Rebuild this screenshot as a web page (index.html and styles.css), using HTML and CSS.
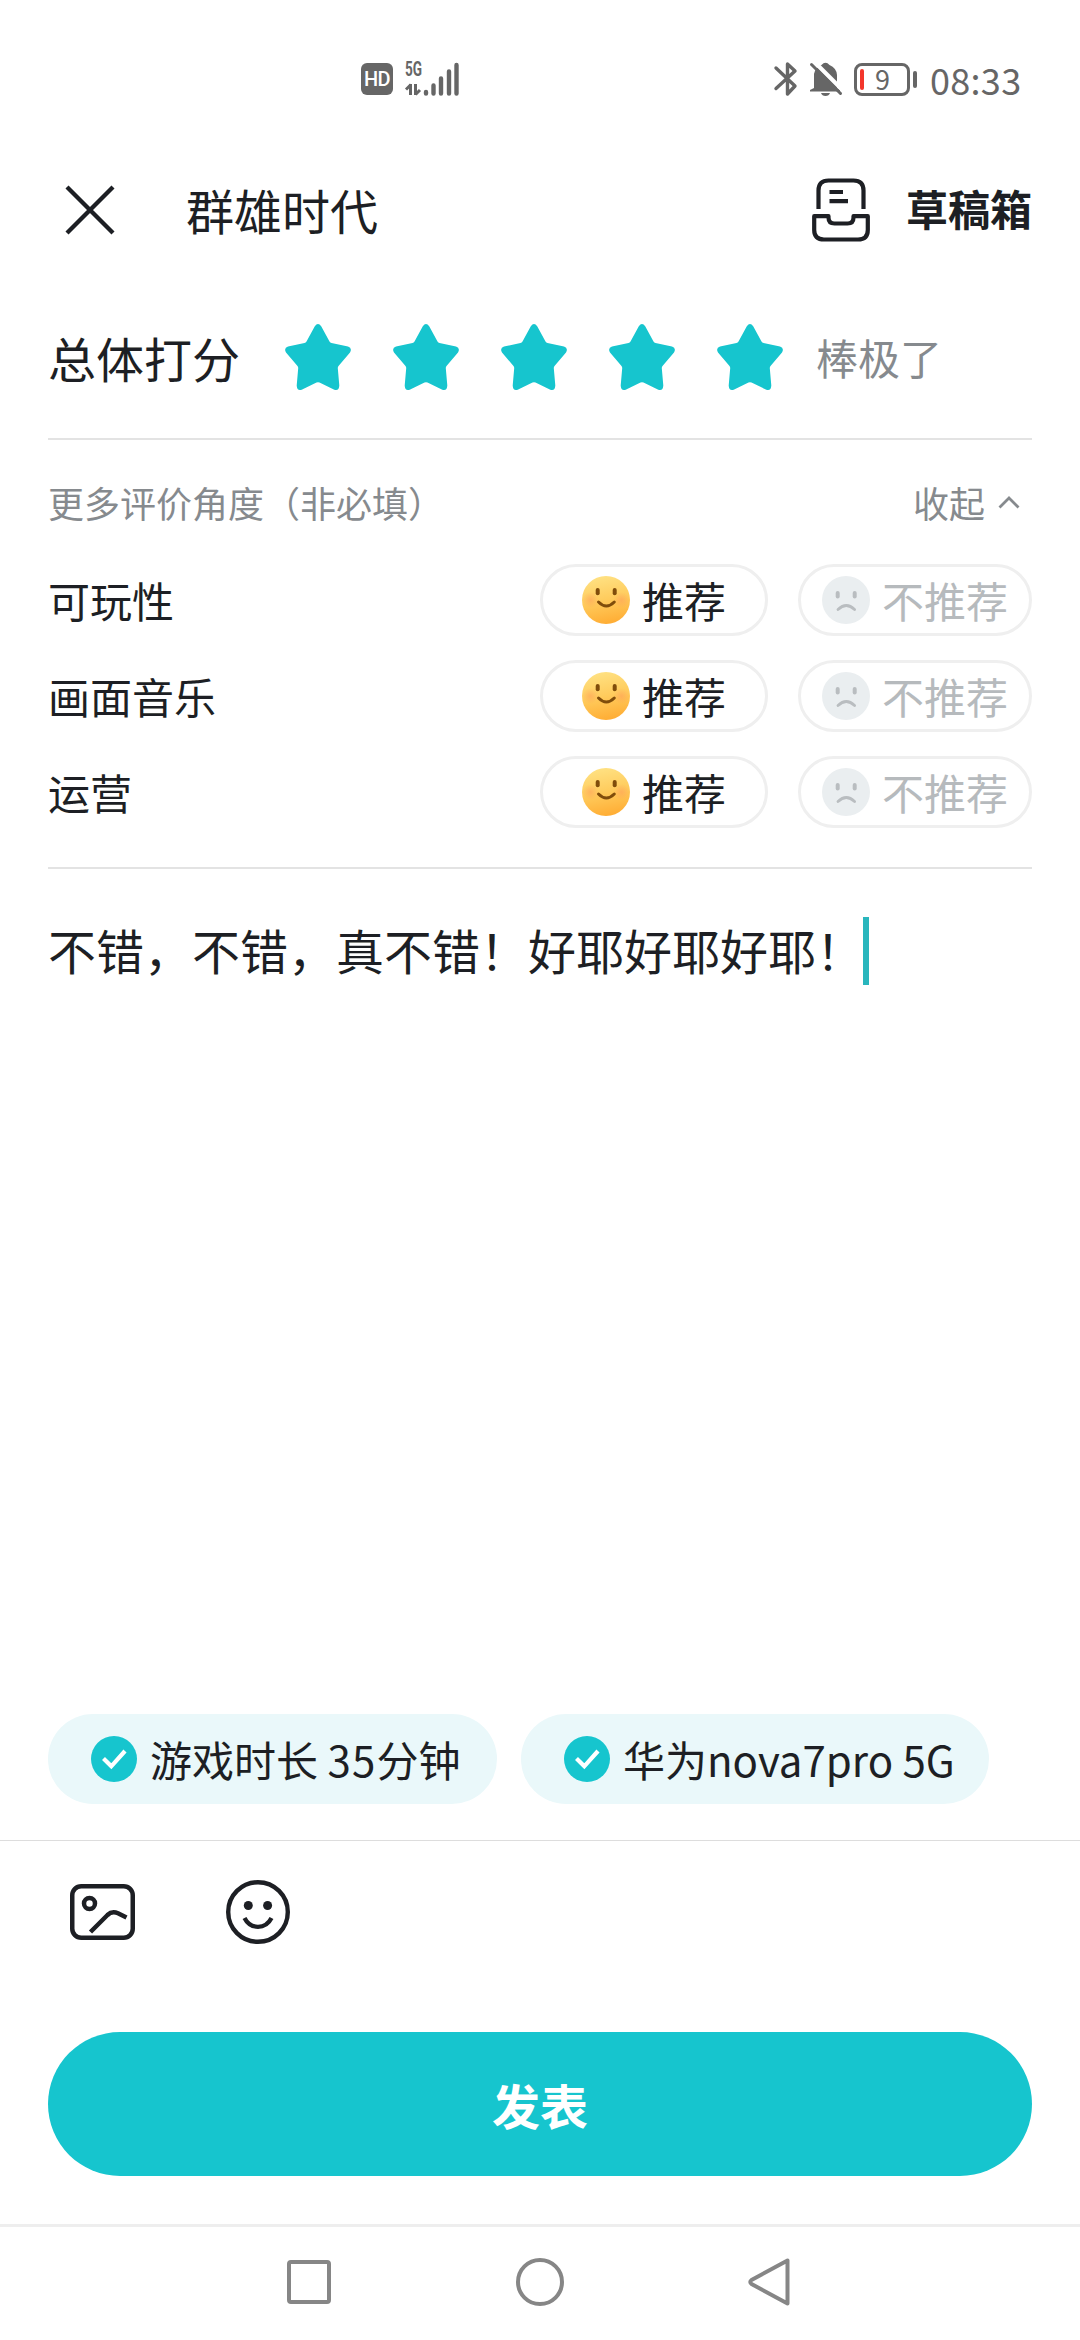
FILE: index.html
```html
<!DOCTYPE html>
<html lang="zh-CN">
<head>
<meta charset="utf-8">
<title>群雄时代</title>
<link rel="stylesheet" href="styles.css">
</head>
<body>
<svg class="defs" width="0" height="0" aria-hidden="true">
  <defs>
    <linearGradient id="sun" x1="0.4" y1="0" x2="0.6" y2="1">
      <stop offset="0" stop-color="#ffe182"/>
      <stop offset="0.5" stop-color="#ffcb5c"/>
      <stop offset="1" stop-color="#ffac33"/>
    </linearGradient>
    <radialGradient id="blush">
      <stop offset="0" stop-color="#ff9a5a" stop-opacity="0.5"/>
      <stop offset="1" stop-color="#ff9a5a" stop-opacity="0"/>
    </radialGradient>
    <symbol id="star" viewBox="0 0 66 66">
      <path d="M29.8 2.2Q33 -2 36.2 2.2L44.5 17.500Q45.200 18.600 46.500 18.900L63 22.500Q67.500 24.200 65 28.500L53.500 42Q52.700 43 52.800 44.200L54.300 61.500Q54 67.500 48.800 65.500L34.500 58.500Q33 57.800 31.500 58.500L17.200 65.500Q12 67.500 11.700 61.500L13.200 44.200Q13.300 43 12.500 42L1 28.500Q-1.500 24.200 3 22.500L19.500 18.900Q20.800 18.600 21.500 17.500Z" fill="#16c5ce"/>
    </symbol>
    <symbol id="happy" viewBox="0 0 48 48">
      <circle cx="24" cy="24" r="24" fill="url(#sun)"/>
      <circle cx="8.500" cy="24" r="8" fill="url(#blush)"/>
      <circle cx="39.500" cy="24" r="8" fill="url(#blush)"/>
      <rect x="13.700" y="12" width="4" height="7.200" rx="2" fill="#804d0b"/>
      <rect x="30.700" y="12" width="4" height="7.200" rx="2" fill="#804d0b"/>
      <path d="M16.500 26Q24.300 34 32.300 26" fill="none" stroke="#804d0b" stroke-width="3" stroke-linecap="round"/>
    </symbol>
    <symbol id="sad" viewBox="0 0 48 48">
      <circle cx="24" cy="24" r="24" fill="#eaeef0"/>
      <rect x="13.700" y="15" width="4" height="7.500" rx="2" fill="#b9bdc0"/>
      <rect x="30.700" y="15" width="4" height="7.500" rx="2" fill="#b9bdc0"/>
      <path d="M16 33.500Q24.300 25.500 32.600 33.500" fill="none" stroke="#b9bdc0" stroke-width="2.800" stroke-linecap="round"/>
    </symbol>
    <symbol id="check" viewBox="0 0 46 46">
      <circle cx="23" cy="23" r="23" fill="#16c5ce"/>
      <path d="M12.500 22.500L20.300 30.300L34 15" fill="none" stroke="#fff" stroke-width="4.200"/>
    </symbol>
  </defs>
</svg>
<div class="screen">
  <div class="status">
    <div class="status-left">
      <span class="hd">HD</span>
      <div class="signal">
        <div class="net"><span class="gen">5G</span>
          <svg width="16" height="13" viewBox="0 0 16 13"><path d="M5.500 1V12M6 1.500L1 6.500M10.500 1V12M10.500 11.500L15 7" fill="none" stroke="#666" stroke-width="3"/></svg>
        </div>
        <svg width="36" height="34" viewBox="0 0 36 34"><path d="M3 30V31.500M10.500 23.500V31.500M18 16.500V31.500M26 9.500V31.500M33.500 3V31.500" fill="none" stroke="#666" stroke-width="4.400" stroke-linecap="round"/></svg>
      </div>
    </div>
    <div class="status-right">
      <svg width="22" height="36" viewBox="0 0 22 36"><path d="M1 7L20 25L12.500 33V3L20 10L1 27.500" fill="none" stroke="#666" stroke-width="3.400" stroke-linejoin="round" stroke-linecap="round"/></svg>
      <svg class="bell" width="32" height="34" viewBox="0 0 32 34"><path d="M4 26V12Q5 6 11.500 3Q15.500 -1.500 19.500 3Q26.500 6 27 13V26L30 28V29.500H0V28ZM11 31H20Q19 34 15.500 34Q12 34 11 31Z" fill="#666"/><path d="M3.500 -1L34 29.500" stroke="#fff" stroke-width="4"/><path d="M1.500 2.500L30.500 31.500" stroke="#666" stroke-width="3" stroke-linecap="round"/></svg>
      <div class="battery"><i class="charge"></i><span>9</span></div>
      <i class="nub"></i>
      <span class="clock">08:33</span>
    </div>
  </div>

  <header class="header">
    <svg width="48" height="48" viewBox="0 0 48 48"><path d="M1 1L47 47M47 1L1 47" stroke="#1d1f24" stroke-width="4.300"/></svg>
    <h1 class="title">群雄时代</h1>
    <svg class="tray" width="58" height="64" viewBox="0 0 58 64"><g fill="none" stroke="#1d1f24" stroke-width="4.200"><path d="M6.500 31V12.500Q6.500 2.500 16.500 2.500H41.500Q51.500 2.500 51.500 12.500V31"/><path d="M17.500 14H31M17.500 23.200H36"/><path d="M2.200 38.200H16.500V39.500Q16.500 45.500 22.500 45.500H35.500Q41.500 45.500 41.500 39.500V38.200H55.800V52Q55.800 61.500 46 61.500H12Q2.200 61.500 2.200 52Z" stroke-linejoin="round"/></g></svg>
    <span class="drafts">草稿箱</span>
  </header>

  <section class="overall">
    <span class="overall-label">总体打分</span>
    <div class="stars">
      <svg width="66" height="66"><use href="#star"/></svg>
      <svg width="66" height="66"><use href="#star"/></svg>
      <svg width="66" height="66"><use href="#star"/></svg>
      <svg width="66" height="66"><use href="#star"/></svg>
      <svg width="66" height="66"><use href="#star"/></svg>
    </div>
    <span class="verdict">棒极了</span>
  </section>

  <section class="aspects">
    <div class="aspects-head">
      <span>更多评价角度（非必填）</span>
      <span class="fold">收起<svg width="22" height="14" viewBox="0 0 22 14"><path d="M1.500 12.500L11 3L20.500 12.500" fill="none" stroke="#868a8e" stroke-width="2.800"/></svg></span>
    </div>
    <div class="aspect">
      <span class="aspect-name">可玩性</span>
      <button class="pill yes"><svg width="48" height="48"><use href="#happy"/></svg><span>推荐</span></button>
      <button class="pill no"><svg width="48" height="48"><use href="#sad"/></svg><span>不推荐</span></button>
    </div>
    <div class="aspect">
      <span class="aspect-name">画面音乐</span>
      <button class="pill yes"><svg width="48" height="48"><use href="#happy"/></svg><span>推荐</span></button>
      <button class="pill no"><svg width="48" height="48"><use href="#sad"/></svg><span>不推荐</span></button>
    </div>
    <div class="aspect">
      <span class="aspect-name">运营</span>
      <button class="pill yes"><svg width="48" height="48"><use href="#happy"/></svg><span>推荐</span></button>
      <button class="pill no"><svg width="48" height="48"><use href="#sad"/></svg><span>不推荐</span></button>
    </div>
  </section>

  <main class="editor"><span class="draft-text">不错，不错，真不错！好耶好耶好耶！</span><i class="caret"></i></main>

  <div class="chips">
    <div class="chip played"><svg width="46" height="46"><use href="#check"/></svg><span>游戏时长 <span class="digits">35</span>分钟</span></div>
    <div class="chip device"><svg width="46" height="46"><use href="#check"/></svg><span>华为nova7pro 5G</span></div>
  </div>

  <div class="tools">
    <svg width="65" height="56" viewBox="0 0 65 56"><g fill="none" stroke="#1d1f24" stroke-width="4.500"><rect x="2.250" y="2.250" width="60.500" height="51.500" rx="9"/><circle cx="19.500" cy="19.500" r="5.500"/><path d="M20.500 48L37.500 31Q42 26.700 48 29.300L56.500 33.500"/></g></svg>
    <svg width="64" height="64" viewBox="0 0 64 64"><circle cx="32" cy="32" r="29.800" fill="none" stroke="#1d1f24" stroke-width="4.400"/><circle cx="22.300" cy="25.500" r="4.500" fill="#1d1f24"/><circle cx="41.600" cy="25.500" r="4.500" fill="#1d1f24"/><path d="M18.500 38Q23 46.800 32 46.800Q41 46.800 45.500 38" fill="none" stroke="#1d1f24" stroke-width="4.300"/></svg>
  </div>

  <button class="publish">发表</button>

  <nav class="navbar">
    <svg width="44" height="44" viewBox="0 0 44 44"><rect x="2" y="2" width="40" height="40" rx="2" fill="none" stroke="#868686" stroke-width="4"/></svg>
    <svg width="48" height="48" viewBox="0 0 48 48"><circle cx="24" cy="24" r="22" fill="none" stroke="#868686" stroke-width="4"/></svg>
    <svg width="42" height="48" viewBox="0 0 42 48"><path d="M39.500 2.500V45.500L3.500 26Q1 24 3.500 22Z" fill="none" stroke="#868686" stroke-width="4" stroke-linejoin="round"/></svg>
  </nav>
</div>
</body>
</html>
```

FILE: styles.css
```css
* { box-sizing: border-box; }
body {
  margin: 0;
  background: #fff;
  color: #1d1f24;
  font-family: "Noto Sans CJK SC", sans-serif;
}
svg { display: block; flex: none; overflow: visible; }
.defs { position: absolute; }
button { font: inherit; border: 0; padding: 0; }
.screen {
  width: 1080px;
  height: 2340px;
  display: flex;
  flex-direction: column;
  overflow: hidden;
}

.status {
  height: 158px;
  padding: 0 61px 0 361px;
  display: flex;
  justify-content: space-between;
  align-items: center;
  color: #666;
}
.status-left { display: flex; align-items: center; gap: 12px; }
.hd {
  width: 32px;
  height: 32px;
  border-radius: 6px;
  background: #666;
  color: #fff;
  font: 500 20px/33px Roboto, sans-serif;
  text-align: center;
  letter-spacing: -0.5px;
}
.signal { display: flex; align-items: flex-end; }
.net { width: 18px; height: 34px; display: flex; flex-direction: column; justify-content: space-between; }
.gen {
  font: 700 20px/15px Roboto, sans-serif;
  transform: scaleX(.68);
  transform-origin: left;
}
.status-right { display: flex; align-items: center; }
.bell { margin-left: 13px; }
.battery {
  margin-left: 12px;
  width: 56px;
  height: 33px;
  border: 3px solid #666;
  border-radius: 8px;
  display: flex;
  align-items: center;
  padding-left: 3px;
  gap: 11px;
  font: 400 27px/27px "Noto Sans CJK SC", sans-serif;
}
.battery span { padding-bottom: 2px; }
.charge { width: 4px; height: 21px; border-radius: 2px; background: #f3362b; }
.nub { margin-left: 3px; width: 4px; height: 17px; border-radius: 2px; background: #666; }
.clock {
  margin-left: 13px;
  width: 89px;
  font: 400 36px/40px "Noto Sans CJK SC", sans-serif;
  letter-spacing: 0.3px;
  white-space: nowrap;
}

.header {
  height: 104px;
  padding: 0 48px 0 66px;
  display: flex;
  align-items: center;
}
.title {
  margin: 0 auto 0 72px;
  padding-bottom: 3px;
  font-size: 48px;
  font-weight: 400;
  line-height: 60px;
}
.drafts {
  margin-left: 36px;
  padding-bottom: 4px;
  font-size: 42px;
  font-weight: 700;
  line-height: 60px;
}

.overall {
  height: 178px;
  margin: 0 48px;
  padding-top: 13px;
  border-bottom: 2px solid #e3e3e3;
  display: flex;
  align-items: center;
}
.overall-label { font-size: 48px; line-height: 60px; }
.stars { display: flex; gap: 42px; margin-left: 45px; }
.verdict { margin-left: 33px; font-size: 42px; line-height: 60px; color: #868a8e; }

.aspects {
  height: 429px;
  margin: 0 48px;
  padding-top: 34px;
  border-bottom: 2px solid #e3e3e3;
  display: flex;
  flex-direction: column;
  gap: 24px;
}
.aspects-head {
  height: 66px;
  padding-bottom: 11px;
  display: flex;
  align-items: center;
  justify-content: space-between;
  font-size: 36px;
  line-height: 54px;
  color: #868a8e;
}
.fold { display: flex; align-items: center; gap: 13px; padding-right: 12px; }
.aspect { height: 72px; display: flex; align-items: center; }
.aspect-name { margin-right: auto; font-size: 42px; line-height: 60px; }
.pill {
  height: 72px;
  border: 3px solid #efefef;
  border-radius: 36px;
  background: transparent;
  display: flex;
  align-items: center;
  justify-content: center;
  gap: 12px;
  font-size: 42px;
  line-height: 60px;
  color: #1d1f24;
}
.yes { width: 228px; }
.no { width: 234px; margin-left: 30px; color: #b6babd; }

.editor {
  flex: 1;
  padding: 48px 48px 0;
  display: flex;
  align-items: flex-start;
  font-size: 48px;
  white-space: nowrap;
}
.draft-text { line-height: 64px; }
.caret { width: 6px; height: 68px; background: #29b6bd; margin-left: -1px; }

.chips { height: 126px; padding: 0 48px; display: flex; gap: 24px; }
.chip {
  height: 90px;
  border-radius: 45px;
  background: #eaf8fa;
  display: flex;
  align-items: center;
  padding-left: 43px;
  gap: 13px;
  font-size: 42px;
  line-height: 60px;
  white-space: nowrap;
}
.played { width: 449px; }
.digits { letter-spacing: 1.2px; }
.device { width: 468px; }

.tools {
  height: 192px;
  border-top: 1px solid #ddd;
  padding: 39px 70px 0;
  display: flex;
  align-items: flex-start;
  gap: 91px;
}
.tools svg:first-child { margin-top: 4px; }
.publish {
  height: 144px;
  margin: 0 48px 48px;
  border-radius: 72px;
  background: #16c5ce;
  color: #fff;
  font-size: 48px;
  font-weight: 700;
  line-height: 60px;
}
.navbar {
  height: 116px;
  border-top: 3px solid #eee;
  padding: 0 290px 4px 287px;
  display: flex;
  align-items: center;
  justify-content: space-between;
}
```
